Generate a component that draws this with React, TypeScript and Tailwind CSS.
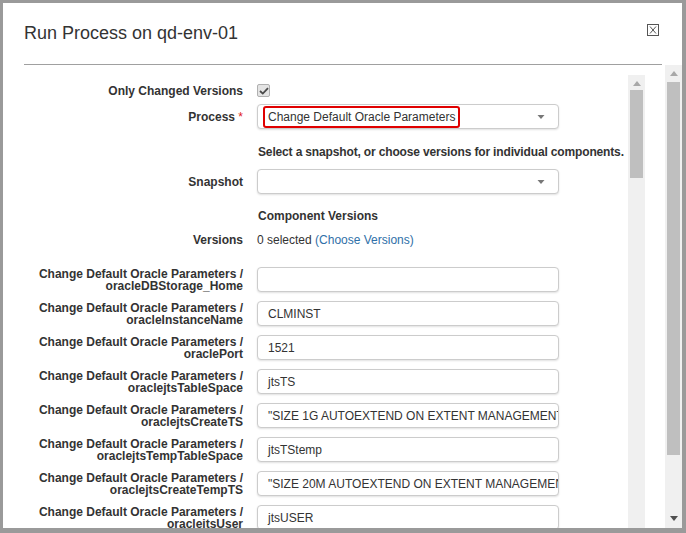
import React from 'react';

const FIELDS: { name: string; value: string }[] = [
  { name: 'oracleDBStorage_Home', value: '' },
  { name: 'oracleInstanceName', value: 'CLMINST' },
  { name: 'oraclePort', value: '1521' },
  { name: 'oraclejtsTableSpace', value: 'jtsTS' },
  { name: 'oraclejtsCreateTS', value: '"SIZE 1G AUTOEXTEND ON EXTENT MANAGEMENT LOCAL"' },
  { name: 'oraclejtsTempTableSpace', value: 'jtsTStemp' },
  { name: 'oraclejtsCreateTempTS', value: '"SIZE 20M AUTOEXTEND ON EXTENT MANAGEMENT LOCAL"' },
  { name: 'oraclejtsUser', value: 'jtsUSER' },
];

function Caret() {
  return (
    <svg width="8" height="4" viewBox="0 0 8 4" className="shrink-0">
      <path d="M0.5 0 L7.5 0 L4 4 Z" fill="#777" />
    </svg>
  );
}

function ScrollArrow({ dir, color }: { dir: 'up' | 'down'; color: string }) {
  return (
    <svg width="8" height="5" viewBox="0 0 8 5">
      {dir === 'up' ? (
        <path d="M0 5 L8 5 L4 0 Z" fill={color} />
      ) : (
        <path d="M0 0 L8 0 L4 5 Z" fill={color} />
      )}
    </svg>
  );
}

function FieldBox({ children }: { children?: React.ReactNode }) {
  return (
    <div className="flex h-[25px] w-[302px] items-center rounded-[4px] border border-[#ccc] bg-white shadow-[0_1px_2px_rgba(0,0,0,0.12)]">
      {children}
    </div>
  );
}

export default function App() {
  return (
    <div className="h-[533px] w-[686px] overflow-hidden bg-white font-['Liberation_Sans',Arial,sans-serif] text-[12px] text-[#333]">
      <div className="flex h-full w-full flex-col border-t-[3px] border-r-[4px] border-b-[5px] border-l-[3px] border-[#9a9a9a]">
        {/* header */}
        <div className="mr-[20px] ml-[21px] flex h-[62px] shrink-0 items-start justify-between border-b border-[#a0a0a0]">
          <h1 className="pt-[19px] text-[18px] leading-[22px] font-normal text-[#333]">
            Run Process on qd-env-01
          </h1>
          <button type="button" className="mt-[21px] mr-[3px]" aria-label="Close">
            <svg width="12" height="12" viewBox="0 0 12 12">
              <rect x="0.5" y="0.5" width="11" height="11" fill="none" stroke="#555" />
              <path d="M3 2.5 L9 9.5 M9 2.5 L3 9.5" stroke="#555" strokeWidth="1" />
            </svg>
          </button>
        </div>

        {/* body */}
        <div className="flex min-h-0 flex-1">
          <div className="flex min-w-0 flex-1 pt-[10px] pr-[20px] pl-[22px]">
            <div className="min-w-0 flex-1 overflow-hidden pt-[8px]">
              <div className="flex h-[15px] items-center">
                <div className="w-[218px] shrink-0 text-right font-bold">Only Changed Versions</div>
                <div className="ml-[14px] flex h-[13px] w-[13px] items-center justify-center rounded-[2px] border border-[#b0b0b0] bg-[#e4e4e4]">
                  <svg width="10" height="8" viewBox="0 0 10 8">
                    <path d="M1 4 L3.8 6.6 L9 1.2" fill="none" stroke="#4a4a4a" strokeWidth="1.8" />
                  </svg>
                </div>
              </div>

              <div className="mt-[6px] flex h-[25px] items-center">
                <div className="w-[218px] shrink-0 text-right font-bold">
                  Process <span className="font-normal text-[#e02020]">*</span>
                </div>
                <div className="ml-[14px]">
                  <FieldBox>
                    <span className="ml-[5px] rounded-[3px] border-2 border-[#e00000] px-[3px] leading-[18px] whitespace-nowrap">
                      Change Default Oracle Parameters
                    </span>
                    <span className="mr-[13px] ml-auto flex">
                      <Caret />
                    </span>
                  </FieldBox>
                </div>
              </div>

              <div className="mt-[16px] flex h-[14px] items-center">
                <div className="w-[218px] shrink-0" />
                <div className="ml-[15px] font-bold tracking-[-0.15px] whitespace-nowrap">
                  Select a snapshot, or choose versions for individual components.
                </div>
              </div>

              <div className="mt-[10px] flex h-[25px] items-center">
                <div className="w-[218px] shrink-0 text-right font-bold">Snapshot</div>
                <div className="ml-[14px]">
                  <FieldBox>
                    <span className="mr-[13px] ml-auto flex">
                      <Caret />
                    </span>
                  </FieldBox>
                </div>
              </div>

              <div className="mt-[15px] flex h-[14px] items-center">
                <div className="w-[218px] shrink-0" />
                <div className="ml-[15px] font-bold">Component Versions</div>
              </div>

              <div className="mt-[10px] flex h-[14px] items-center">
                <div className="w-[218px] shrink-0 text-right font-bold">Versions</div>
                <div className="ml-[14px]">
                  0 selected <span className="text-[#2f70a8]">(Choose Versions)</span>
                </div>
              </div>

              <div className="mt-[20px] flex flex-col gap-[9px]">
                {FIELDS.map((f) => (
                  <div key={f.name} className="flex h-[25px] items-center">
                    <div className="w-[218px] shrink-0 text-right leading-[12px] font-bold">
                      Change Default Oracle Parameters /
                      <br />
                      {f.name}
                    </div>
                    <div className="ml-[14px]">
                      <FieldBox>
                        <div className="w-full overflow-hidden px-[10px] whitespace-nowrap">
                          {f.value}
                        </div>
                      </FieldBox>
                    </div>
                  </div>
                ))}
              </div>
            </div>

            {/* inner scrollbar */}
            <div className="flex w-[17px] shrink-0 flex-col items-center bg-[#f0f0f0] pt-[6px]">
              <ScrollArrow dir="up" color="#a8a8a8" />
              <div className="mt-[4px] h-[88px] w-[13px] bg-[#bfbfbf]" />
            </div>
          </div>

          {/* outer scrollbar */}
          <div className="flex w-[17px] shrink-0 flex-col items-center bg-[#f0f0f0] pt-[6px] pb-[7px]">
            <ScrollArrow dir="up" color="#a8a8a8" />
            <div className="mt-[6px] h-[373px] w-[13px] bg-[#bfbfbf]" />
            <div className="mt-auto">
              <ScrollArrow dir="down" color="#505050" />
            </div>
          </div>
        </div>
      </div>
    </div>
  );
}
